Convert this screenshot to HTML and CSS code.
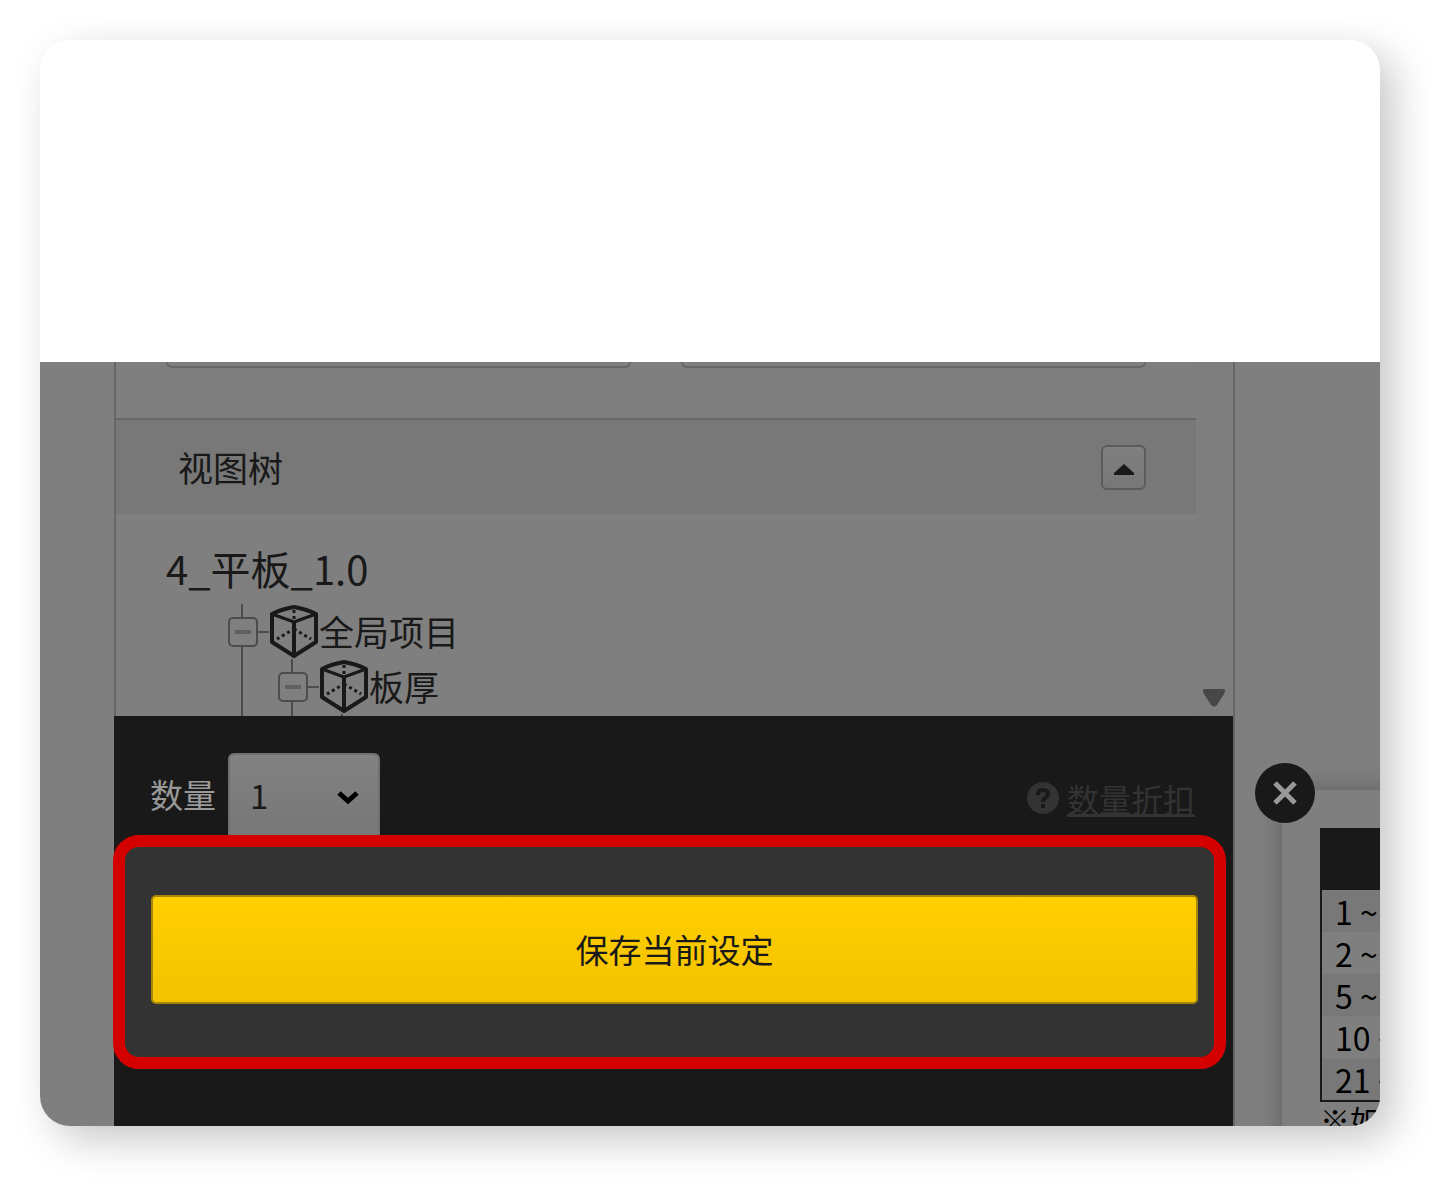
FILE: index.html
```html
<!DOCTYPE html>
<html lang="zh-CN">
<head>
    <meta charset="UTF-8">
    <meta name="viewport" content="width=device-width, initial-scale=1.0">
    <title>视图树</title>
    <link rel="stylesheet" href="styles.css">
</head>
<body>
    <svg class="defs" aria-hidden="true">
        <symbol id="cube" viewBox="0 0 50 54">
            <g fill="none" stroke="#191919" stroke-width="4" stroke-linejoin="round">
                <path d="M25 2 Q37 4 47 9 V37 L25 51 L3 37 V9 Q13 4 25 2 Z"/>
                <path stroke-width="3" d="M3 9 L25 17 L47 9"/>
                <path d="M25 17 V51"/>
                <path stroke-width="3" stroke-dasharray="3 3" d="M25 5 V24 L8 34 M25 24 L42 34"/>
            </g>
        </symbol>
    </svg>

    <main class="card">
        <div class="blank"></div>
        <div class="stage">
            <section class="panel">
                <div class="scroll-area">
                    <div class="content">
                        <div class="fields">
                            <div class="field"></div>
                            <div class="field"></div>
                        </div>
                        <div class="section-title">
                            <h2>视图树</h2>
                            <button type="button" class="collapse" aria-label="收起">
                                <svg width="20" height="15" viewBox="0 0 20 15"><path d="M10 4 L20 13 V15 H0 V13 Z" fill="#191919"/></svg>
                            </button>
                        </div>
                        <h3>4_平板_1.0</h3>
                        <ul class="tree">
                            <li>
                                <div class="node">
                                    <button type="button" class="toggle" aria-label="收起"></button>
                                    <span class="link"></span>
                                    <svg class="cube"><use href="#cube"/></svg>
                                    <span>全局项目</span>
                                </div>
                                <ul>
                                    <li>
                                        <div class="node">
                                            <button type="button" class="toggle" aria-label="收起"></button>
                                            <span class="link"></span>
                                            <svg class="cube"><use href="#cube"/></svg>
                                            <span>板厚</span>
                                        </div>
                                        <ul>
                                            <li></li>
                                        </ul>
                                    </li>
                                </ul>
                            </li>
                        </ul>
                    </div>
                    <div class="scrollbar">
                        <svg width="24" height="18" viewBox="0 0 24 18"><path d="M2 0 H22 Q24 1 22 5 L15 16 Q12 19 9 16 L2 5 Q0 1 2 0 Z" fill="#474747"/></svg>
                    </div>
                </div>

                <div class="order">
                    <div class="quantity">
                        <label for="qty">数量</label>
                        <div class="select-wrap">
                            <select id="qty">
                                <option>1</option>
                            </select>
                            <svg class="arrow" width="22" height="14" viewBox="0 0 22 14"><path d="M2 3 L11 11 L20 3" fill="none" stroke="#000" stroke-width="5"/></svg>
                        </div>
                        <a class="discount" href="#">
                            <svg width="32" height="32" viewBox="0 0 32 32">
                                <circle cx="16" cy="16" r="16" fill="#333"/>
                                <path d="M11 13 V12 Q11 8 16 8 Q21 8 21 12 Q21 14 18 16 Q16 17 16 20" fill="none" stroke="#191919" stroke-width="4"/>
                                <rect x="14" y="22" width="4" height="4" fill="#191919"/>
                            </svg>
                            <span>数量折扣</span>
                        </a>
                    </div>
                    <div class="highlight">
                        <button type="button" class="save">保存当前设定</button>
                    </div>
                </div>
            </section>

            <aside>
                <div class="popup">
                    <button type="button" class="close" aria-label="关闭">
                        <svg width="24" height="24" viewBox="0 0 24 24"><path d="M2 2 L22 22 M22 2 L2 22" stroke="#999" stroke-width="5"/></svg>
                    </button>
                    <table>
                        <thead>
                            <tr><th></th></tr>
                        </thead>
                        <tbody>
                            <tr><td>1 ~</td></tr>
                            <tr><td>2 ~</td></tr>
                            <tr><td>5 ~</td></tr>
                            <tr><td>10 ~</td></tr>
                            <tr><td>21 ~</td></tr>
                        </tbody>
                    </table>
                    <p>※如</p>
                </div>
            </aside>
        </div>
    </main>
</body>
</html>
```
FILE: styles.css
```css
* { box-sizing: border-box; }
body { margin: 0; padding: 40px 68px 68px 40px; background: #fff; color: #191919; font-family: "Noto Sans CJK SC", sans-serif; }
h2, h3, p, ul { margin: 0; padding: 0; font-weight: normal; }
button, select { margin: 0; padding: 0; font-family: inherit; color: inherit; cursor: pointer; }
svg { display: block; flex: none; }
.defs { display: none; }

.card { border-radius: 30px; overflow: hidden; background: #fff; box-shadow: 14px 14px 40px rgba(0, 0, 0, 0.22); }
.blank { height: 322px; }
.stage { display: flex; background: #7f7f7f; padding-left: 74px; }

/* configuration panel */
.panel { flex: 0 1 1121px; border: solid #676767; border-width: 0 2px; }
.scroll-area { display: flex; height: 354px; overflow: hidden; }
.content { flex: 1; }
.scrollbar { width: 37px; display: flex; align-items: flex-end; justify-content: center; padding: 0 2px 9px 0; background: #7e7e7e; }
.fields { display: flex; gap: 50px; padding: 0 50px; height: 56px; }
.field { flex: 1; height: 6px; border: 2px solid #676767; border-top: 0; border-radius: 0 0 6px 6px; }
.section-title { display: flex; align-items: center; justify-content: space-between; height: 96px; padding: 0 50px 0 62px; border-top: 2px solid #676767; background: #787878; }
.section-title h2 { font-size: 35px; line-height: 40px; }
.collapse { display: flex; align-items: center; justify-content: center; width: 45px; height: 45px; border: 2px solid #5c5c5c; border-radius: 6px; background: linear-gradient(#808080, #777); }
h3 { padding: 30px 50px 12px; font-size: 40px; line-height: 48px; }

/* tree */
.tree { padding-left: 112px; }
ul { list-style: none; }
li { position: relative; min-height: 40px; }
li::before { content: ""; position: absolute; top: 0; bottom: 0; left: 13px; width: 2px; background: #4c4c4c; }
li ul { padding-left: 50px; }
.node { position: relative; display: flex; align-items: center; height: 55px; font-size: 35px; line-height: 40px; }
.node > span:last-child { padding-bottom: 2px; }
.toggle { position: relative; width: 30px; height: 30px; border: 2px solid #4c4c4c; border-radius: 5px; background: #7f7f7f; }
.toggle::before { content: ""; position: absolute; top: 11px; left: 5px; width: 16px; height: 4px; background: #606060; }
.link { width: 11px; height: 2px; background: #4c4c4c; }
.cube { width: 50px; height: 54px; }

/* quantity and save */
.order { margin-left: -2px; height: 410px; padding-top: 37px; background: #191919; }
.quantity { display: flex; align-items: center; height: 82px; padding: 0 38px 0 36px; }
.quantity label { color: #999; font-size: 33px; line-height: 40px; }
.select-wrap { position: relative; margin-left: 12px; }
.select-wrap select { display: block; width: 152px; height: 82px; padding-left: 20px; border: 2px solid #707070; border-bottom: 0; border-radius: 6px 6px 0 0; background: linear-gradient(#828282, #777); font-size: 33px; appearance: none; }
.arrow { position: absolute; top: 37px; right: 21px; pointer-events: none; }
.discount { display: flex; align-items: center; gap: 8px; margin-left: auto; padding-top: 8px; color: #333; font-size: 32px; line-height: 40px; text-decoration: none; }
.discount span { text-decoration: underline; text-decoration-thickness: 3px; text-underline-offset: 2px; }
.highlight { position: relative; margin: 0 7px 0 -1px; padding: 48px 16px 53px 26px; border: 12px solid #d40000; border-radius: 26px; background: #333; }
.save { display: block; width: 100%; height: 109px; padding-bottom: 2px; border: 2px solid #a58609; border-radius: 5px; background: linear-gradient(#ffcf00, #f3c200); font-size: 33px; }

/* discount popup */
aside { flex: 1; min-width: 0; overflow: hidden; height: 764px; padding: 428px 0 0 47px; }
.popup { position: relative; width: 400px; height: 400px; padding: 38px; background: #7f7f7f; box-shadow: 0 0 22px rgba(0, 0, 0, 0.25); }
.close { position: absolute; top: -27px; left: -27px; display: flex; align-items: center; justify-content: center; width: 60px; height: 60px; border: 0; border-radius: 50%; background: #191919; }
table { width: 100%; border: 2px solid #191919; border-spacing: 0; color: #000; font-size: 32px; line-height: 42px; }
th { height: 60px; padding: 0; background: #191919; }
td { height: 42px; padding: 0 13px; }
tbody tr:nth-child(odd) { background: #787878; }
.popup p { color: #000; font-size: 30px; line-height: 34px; }
```
